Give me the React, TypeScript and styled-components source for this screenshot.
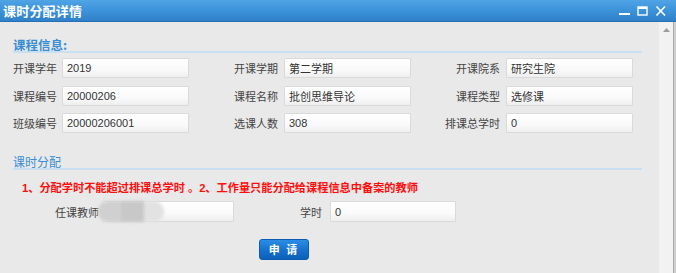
import React from 'react';
import styled, { createGlobalStyle } from 'styled-components';

const GlobalStyle = createGlobalStyle`
  html, body {
    margin: 0;
    padding: 0;
    background: #e9e9e9;
  }
  body {
    font-family: 'Liberation Sans', 'Noto Sans CJK SC', sans-serif;
  }
`;

interface fieldProps {
  label: string;
  value: string;
}

const courseFields: fieldProps[] = [
  { label: '开课学年', value: '2019' },
  { label: '开课学期', value: '第二学期' },
  { label: '开课院系', value: '研究生院' },
  { label: '课程编号', value: '20000206' },
  { label: '课程名称', value: '批创思维导论' },
  { label: '课程类型', value: '选修课' },
  { label: '班级编号', value: '20000206001' },
  { label: '选课人数', value: '308' },
  { label: '排课总学时', value: '0' },
];

const App = () => {
  return (
    <Window>
      <GlobalStyle />
      <TitleBar>
        <Title>课时分配详情</Title>
        <Controls>
          <svg width='12' height='12' viewBox='0 0 12 12'>
            <rect x='0' y='8' width='11' height='2' fill='#fff' />
          </svg>
          <svg width='12' height='12' viewBox='0 0 12 12'>
            <rect x='1' y='2' width='9' height='8' fill='none' stroke='#fff' strokeWidth='1.4' />
            <rect x='1' y='2' width='9' height='2' fill='#fff' />
          </svg>
          <svg width='12' height='12' viewBox='0 0 12 12'>
            <path d='M1.5 1.5 L10 10.5 M10 1.5 L1.5 10.5' stroke='#fff' strokeWidth='1.6' />
          </svg>
        </Controls>
      </TitleBar>
      <Body>
        <Content>
          <SectionTitle $bold>课程信息:</SectionTitle>
          <InfoGrid>
            {courseFields.map((field) => (
              <React.Fragment key={field.label}>
                <Label>{field.label}</Label>
                <Field readOnly value={field.value} />
              </React.Fragment>
            ))}
          </InfoGrid>
          <SectionTitle $top={22}>课时分配</SectionTitle>
          <Note>1、分配学时不能超过排课总学时 。2、工作量只能分配给课程信息中备案的教师</Note>
          <AssignRow>
            <Label>任课教师</Label>
            <MaskedField>
              <Field readOnly value='' $height={21} />
              <Blur>
                <span />
                <span />
                <span />
              </Blur>
            </MaskedField>
            <Label>学时</Label>
            <Field readOnly value='0' $height={21} />
          </AssignRow>
          <ButtonRow>
            <SubmitButton>申 请</SubmitButton>
          </ButtonRow>
        </Content>
        <ScrollTrack>
          <svg width='7' height='4' viewBox='0 0 7 4'>
            <path d='M0 4 L3.5 0 L7 4 Z' fill='#9c9c9c' />
          </svg>
        </ScrollTrack>
        <OuterEdge />
      </Body>
    </Window>
  );
};

const Window = styled.div`
  width: 676px;
  height: 273px;
  display: flex;
  flex-direction: column;
  overflow: hidden;
  background: #e9e9e9;
`;
const TitleBar = styled.div`
  height: 21px;
  flex: none;
  display: flex;
  align-items: center;
  justify-content: space-between;
  background: linear-gradient(to bottom, #4ea4e4 0%, #3b91d8 55%, #2f80c8 100%);
  border-bottom: 1px solid #2670b4;
  padding: 0 9px 0 3px;
`;
const Title = styled.span`
  color: #fff;
  font-family: 'Noto Sans CJK SC', sans-serif;
  font-size: 13px;
  font-weight: 700;
  letter-spacing: 0.2px;
`;
const Controls = styled.div`
  display: flex;
  gap: 6px;
  align-items: center;
  svg {
    display: block;
  }
`;
const Body = styled.div`
  flex: 1;
  display: flex;
  min-height: 0;
`;
const Content = styled.div`
  flex: 1;
  padding: 16px 17px 0 13px;
  font-family: 'Noto Sans CJK SC', sans-serif;
`;
const SectionTitle = styled.div<{ $bold?: boolean; $top?: number }>`
  margin-top: ${(p) => p.$top ?? 0}px;
  height: 13px;
  font-size: ${(p) => (p.$bold ? 12.5 : 12)}px;
  line-height: 13px;
  font-weight: ${(p) => (p.$bold ? 700 : 400)};
  color: #3a8ed4;
  border-bottom: 2px solid #c9e0f2;
`;
const InfoGrid = styled.div`
  display: grid;
  grid-template-columns: 49px 127px 95px 127px 95px 127px;
  grid-auto-rows: 20px;
  row-gap: 7.5px;
  margin-top: 5px;
`;
const Label = styled.span`
  font-size: 11px;
  line-height: 14px;
  color: #444;
  text-align: right;
  padding-right: 6px;
  align-self: center;
  white-space: nowrap;
`;
const Field = styled.input<{ $height?: number }>`
  display: block;
  box-sizing: border-box;
  width: 100%;
  height: ${(p) => p.$height ?? 20}px;
  margin: 0;
  padding: 0 4px;
  border: 1px solid #dadada;
  border-radius: 1px;
  background: linear-gradient(to bottom, #ffffff 0%, #fafafa 60%, #efefef 100%);
  font-family: 'Liberation Sans', 'Noto Sans CJK SC', sans-serif;
  font-size: 11px;
  color: #333;
  outline: 0;
`;
const Note = styled.div`
  margin: 10px 0 0 9px;
  height: 16px;
  font-size: 11.2px;
  line-height: 16px;
  font-weight: 700;
  color: #ff0d0d;
  font-family: 'Liberation Sans', 'Noto Sans CJK SC', sans-serif;
  white-space: nowrap;
`;
const AssignRow = styled.div`
  display: grid;
  grid-template-columns: 89px 132px 96px 126px;
  grid-template-rows: 21px;
  align-items: center;
  margin-top: 5px;
  ${Label} {
    padding-right: 8px;
  }
  > ${Label}:first-child {
    padding-right: 3px;
  }
`;
const MaskedField = styled.div`
  position: relative;
`;
const Blur = styled.div`
  position: absolute;
  left: -4px;
  top: 0;
  width: 66px;
  height: 21px;
  display: flex;
  border-radius: 10px;
  overflow: hidden;
  filter: blur(1.5px);
  span {
    flex: 1;
    background: #d0d0d0;
  }
  span:nth-child(2) {
    background: #c8c8c8;
  }
  span:nth-child(3) {
    background: #e2e2e2;
    flex: 0.9;
  }
`;
const ButtonRow = styled.div`
  display: flex;
  margin-top: 17px;
  padding-left: 246px;
`;
const SubmitButton = styled.button`
  width: 50px;
  height: 21px;
  padding: 0;
  border: 1px solid #0b5cb0;
  border-radius: 3px;
  background: linear-gradient(to bottom, #2a8ee6 0%, #1470cc 55%, #0d60b8 100%);
  color: #fff;
  font-family: 'Noto Sans CJK SC', sans-serif;
  font-size: 11px;
  line-height: 19px;
  font-weight: 700;
  letter-spacing: 2px;
  white-space: pre;
  cursor: pointer;
`;
const ScrollTrack = styled.div`
  width: 14px;
  flex: none;
  background: #f2f2f2;
  display: flex;
  justify-content: center;
  padding-top: 6px;
  svg {
    display: block;
  }
`;
const OuterEdge = styled.div`
  width: 2px;
  flex: none;
  background: #d0d0d0;
  border-left: 1px solid #a8a8a8;
`;

export default App;
